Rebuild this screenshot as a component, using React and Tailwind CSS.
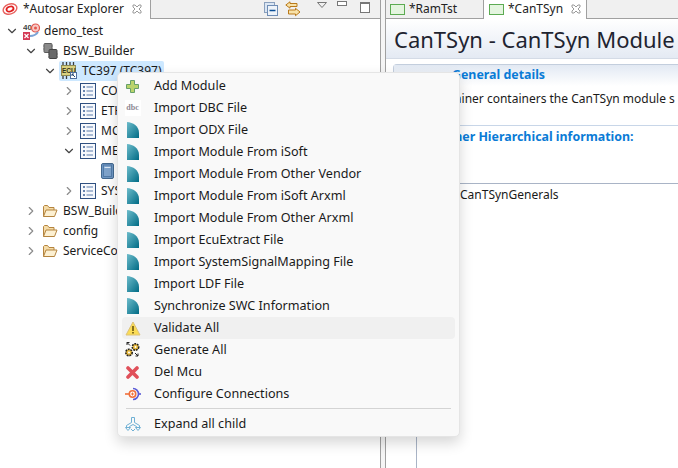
import { ChevronDown, ChevronRight } from "lucide-react";

const font = { fontFamily: '"Noto Sans", sans-serif' };

function ListIcon() {
  return (
    <svg width="16" height="16" viewBox="0 0 16 16">
      <rect x="0.5" y="0.5" width="15" height="15" fill="#f6f8fc" stroke="#2f4f80" />
      <path d="M3 4h2M3 8h2M3 12h2" stroke="#3c5f95" strokeWidth="1.4" />
      <path d="M6.5 4h6.5M6.5 8h6.5M6.5 12h6.5" stroke="#5d7cab" strokeWidth="1" />
    </svg>
  );
}

function FolderIcon() {
  return (
    <svg width="16" height="14" viewBox="0 0 16 14">
      <path d="M1.5 12.5V2.5l1-1h3l1.5 2h5v2.5" fill="#f5dca8" stroke="#b4843f" />
      <path d="M1.5 12.5l2.5-6.5h11l-2.5 6.5z" fill="#fcf0d2" stroke="#b4843f" />
    </svg>
  );
}

function ChipIcon() {
  return (
    <svg width="15" height="16" viewBox="0 0 15 16">
      <path d="M0 3h1M0 6h1M9 3h1M9 6h1M5 11h1M5 14h1M14 11h1M14 14h1" stroke="#999" />
      <rect x="1" y="0.5" width="8" height="9" rx="1" fill="#8a8a8a" stroke="#5c5c5c" />
      <rect x="6" y="6.5" width="8" height="9" rx="1" fill="#6a6a6a" stroke="#444" />
    </svg>
  );
}

function EcuIcon() {
  return (
    <svg width="16" height="18" viewBox="0 0 16 18">
      <path d="M2 0v3M5.5 0v3M9 0v3M12.5 0v3" stroke="#3c3c3c" strokeWidth="1.3" />
      <path d="M2 14v3M5.5 14v3" stroke="#3c3c3c" strokeWidth="1.3" />
      <rect x="0.5" y="3.5" width="14" height="10" fill="#d9d07e" stroke="#8d8a55" />
      <text x="1" y="11" fontSize="6.5" fontWeight="700" fill="#30301a" fontFamily="Liberation Sans, sans-serif">ECU</text>
      <rect x="9.5" y="10.5" width="6" height="6" fill="#fff" stroke="#4f6f9f" />
      <path d="M11 12l3 3M11 12h2M11 12v2" stroke="#24466f" />
    </svg>
  );
}

function ProjectIcon() {
  return (
    <svg width="17" height="17" viewBox="0 0 17 17">
      <text x="0" y="7" fontSize="8" fontWeight="700" fill="#444" fontFamily="Liberation Sans, sans-serif">40</text>
      <circle cx="12.5" cy="5" r="4" fill="#f8c9c4" stroke="#e2574f" strokeWidth="1.2" />
      <circle cx="12.5" cy="5" r="1.5" fill="#e2574f" />
      <path d="M7 13c3 0 6-1 8-4" stroke="#7ba4d6" strokeWidth="2" fill="none" />
      <rect x="0" y="9" width="7" height="8" fill="#d43a55" />
      <path d="M1.5 11l4 4M5.5 11l-4 4" stroke="#fff" strokeWidth="1.2" />
    </svg>
  );
}

function BookIcon() {
  return (
    <svg width="13" height="16" viewBox="0 0 13 16">
      <rect x="0.5" y="0.5" width="12" height="15" rx="1.5" fill="#6f97c4" stroke="#44698f" />
      <rect x="2.5" y="2" width="8" height="11.5" fill="#7fa3cb" stroke="#527ba8" />
      <path d="M3.5 4.5h6" stroke="#dce8f4" />
    </svg>
  );
}

function TealIcon() {
  return (
    <svg width="12" height="16" viewBox="0 0 12 16">
      <defs>
        <linearGradient id="teal" x1="0" y1="0" x2="1" y2="1">
          <stop offset="0" stopColor="#6dbccb" />
          <stop offset="1" stopColor="#006b85" />
        </linearGradient>
      </defs>
      <path d="M0 0C6 0.5 12 4 12 11V16H0z" fill="url(#teal)" />
    </svg>
  );
}

function CloseIcon({ className }) {
  return (
    <svg width="10" height="10" viewBox="0 0 10 10" className={className} fill="none" stroke="#9a9a9a">
      <path d="M1 1h2l2 2 2-2h2v2L7 5l2 2v2H7L5 7 3 9H1V7l2-2-2-2z" />
    </svg>
  );
}

const plusIcon = (
  <svg width="13" height="13" viewBox="0 0 13 13">
    <path d="M4.5 0.5h4v4h4v4h-4v4h-4v-4h-4v-4h4z" fill="#b9d46b" stroke="#66a06a" />
  </svg>
);

const dbcIcon = (
  <span className="flex h-4 w-4 items-center justify-center bg-white text-[8px] font-bold leading-none text-[#8d8794]" style={{ fontFamily: '"Liberation Serif", serif' }}>
    dbc
  </span>
);

const warnIcon = (
  <svg width="16" height="15" viewBox="0 0 16 15">
    <path d="M8 1l7 13H1z" fill="#fbdc55" stroke="#dcc27a" strokeLinejoin="round" />
    <path d="M8 5v5" stroke="#6a5410" strokeWidth="1.6" />
    <path d="M8 11v1.5" stroke="#6a5410" strokeWidth="1.6" />
  </svg>
);

const gearsIcon = (
  <svg width="17" height="16" viewBox="0 0 17 16">
    <circle cx="11.5" cy="5" r="3.2" fill="#e8b93c" stroke="#222" strokeWidth="1.6" strokeDasharray="1.8 0.9" />
    <circle cx="5" cy="10.5" r="3.2" fill="#e8b93c" stroke="#222" strokeWidth="1.6" strokeDasharray="1.8 0.9" />
    <circle cx="11.5" cy="5" r="1" fill="#fff" />
    <circle cx="5" cy="10.5" r="1" fill="#fff" />
    <path d="M11 11l3 3M14 11.5V14h-2.5M3 0.5L6 3.5M3 3V0.5h2.5" stroke="#222" fill="none" />
  </svg>
);

const delIcon = (
  <svg width="13" height="13" viewBox="0 0 13 13">
    <path d="M2 2l9 9M11 2l-9 9" stroke="#e0505a" strokeWidth="3.6" strokeLinecap="round" />
  </svg>
);

const connectIcon = (
  <svg width="16" height="14" viewBox="0 0 16 14">
    <path d="M8 1.5a5.5 5.5 0 0 1 0 11" fill="none" stroke="#5a5ad6" strokeWidth="1.6" />
    <path d="M13 7h3" stroke="#5a5ad6" strokeWidth="1.6" />
    <path d="M0 7h5" stroke="#f0703c" strokeWidth="1.6" />
    <circle cx="7.5" cy="7" r="3.2" fill="#fff" stroke="#f0703c" strokeWidth="1.6" />
    <path d="M6 7h3M7.5 5.5v3" stroke="#f0703c" />
  </svg>
);

const expandIcon = (
  <svg width="16" height="15" viewBox="0 0 16 15" fill="none" stroke="#6fb0d4">
    <path d="M6.5 0.5h3v5l5 3v2h-3v-1l-3.5-2-3.5 2v1h-3v-2l5-3z" />
    <path d="M0.5 10.5h5l-2.5 3zM10.5 10.5h5l-2.5 3z" />
    <path d="M6 12l2 2 2-2" />
  </svg>
);

const menuItems = [
  { label: "Add Module", icon: plusIcon },
  { label: "Import DBC File", icon: dbcIcon },
  { label: "Import ODX File" },
  { label: "Import Module From iSoft" },
  { label: "Import Module From Other Vendor" },
  { label: "Import Module From iSoft Arxml" },
  { label: "Import Module From Other Arxml" },
  { label: "Import EcuExtract File" },
  { label: "Import SystemSignalMapping File" },
  { label: "Import LDF File" },
  { label: "Synchronize SWC Information" },
  { label: "Validate All", icon: warnIcon, active: true },
  { label: "Generate All", icon: gearsIcon },
  { label: "Del Mcu", icon: delIcon },
  { label: "Configure Connections", icon: connectIcon },
];

function MenuRow({ label, icon, active }) {
  return (
    <div className={`flex h-[22px] items-center rounded-[4px] ${active ? "bg-[#f0f0f0]" : ""}`}>
      <span className="flex w-[21px] shrink-0 justify-center">{icon || <TealIcon />}</span>
      <span className="pl-[11px] text-[12.6px] text-[#1a1a1a]">{label}</span>
    </div>
  );
}

function ContextMenu() {
  return (
    <div className="absolute left-[117px] top-[72px] w-[343px] rounded-[5px] border border-[#e5e5e5] bg-[#f9f9f9] px-[4px] pt-[2px] pb-px shadow-[0_6px_14px_rgba(0,0,0,0.16)]">
      {menuItems.map((item) => (
        <MenuRow key={item.label} {...item} />
      ))}
      <div className="mx-[4px] mt-[3px] mb-[4px] h-px bg-[#d4d4d4]" />
      <MenuRow label="Expand all child" icon={expandIcon} />
    </div>
  );
}

function TreeRow({ depth, open, leaf, icon, label, selected }) {
  const Chevron = open ? ChevronDown : ChevronRight;
  return (
    <div className="flex h-5 items-center" style={{ paddingLeft: depth * 19 + 3 }}>
      <span className="flex w-[17px] justify-center">
        {!leaf && <Chevron size={14} strokeWidth={2} className={open ? "text-[#444]" : "text-[#8c8c8c]"} />}
      </span>
      <div className={`ml-px flex h-5 items-center gap-[4px] rounded-[2px] pl-px pr-[2px] ${selected ? "bg-[#cde8ff]" : ""}`}>
        <span className="flex w-[18px] justify-center">{icon}</span>
        <span className="whitespace-nowrap text-[12px] text-[#1a1a1a]">{label}</span>
      </div>
    </div>
  );
}

function ExplorerPane() {
  return (
    <aside className="flex h-full w-[380px] shrink-0 flex-col">
      <div className="flex h-[19px] items-stretch bg-[#f0f0f0]">
        <div className="flex w-[151px] items-center gap-[3px] border-r border-[#a0a0a0] bg-white pb-px pl-[2px]">
          <svg width="18" height="14" viewBox="0 0 18 14">
            <ellipse cx="8" cy="7" rx="7" ry="5" fill="none" stroke="#e8625f" strokeWidth="1.4" transform="rotate(-20 8 7)" />
            <ellipse cx="8" cy="7" rx="3.6" ry="2.4" fill="#fff" stroke="#e01f1f" strokeWidth="1.8" transform="rotate(-20 8 7)" />
          </svg>
          <span className="whitespace-nowrap text-[12px] text-[#222]">*Autosar Explorer</span>
          <CloseIcon className="ml-[5px]" />
        </div>
        <div className="flex flex-1 items-center border-b border-[#a0a0a0] pl-[113px]">
          <svg width="14" height="14" viewBox="0 0 14 14">
            <rect x="0.5" y="0.5" width="10" height="10" fill="#dbe6f3" stroke="#8aa0bd" />
            <rect x="3.5" y="3.5" width="10" height="10" fill="#eef3f9" stroke="#6f8db5" />
            <path d="M5.5 8.5h6" stroke="#0a4f96" strokeWidth="1.5" />
          </svg>
          <svg width="16" height="16" viewBox="0 0 16 16" className="ml-[7px]" stroke="#b9791a" fill="#f8e2a8">
            <path d="M12 2.5H5V0.8L0.8 4 5 7.2V5.5h7z" />
            <path d="M3.5 9h7V7.3L15 11l-4.5 3.7V13h-7z" />
          </svg>
          <svg width="10" height="6" viewBox="0 0 10 6" className="ml-[16px] mb-[8px]" fill="none" stroke="#777">
            <path d="M0.5 0.5h9L5 5.5z" />
          </svg>
          <span className="ml-[10px] mb-[12px] h-[5px] w-[10px] border border-[#777] bg-white" />
          <span className="ml-[13px] mb-[4px] h-[11px] w-[10px] border border-[#777] border-t-2 bg-white" />
        </div>
      </div>
      <div className="flex-1 bg-white pt-[2px]">
        <TreeRow depth={0} open icon={<ProjectIcon />} label="demo_test" />
        <TreeRow depth={1} open icon={<ChipIcon />} label="BSW_Builder" />
        <TreeRow depth={2} open selected icon={<EcuIcon />} label="TC397 (TC397)" />
        <TreeRow depth={3} icon={<ListIcon />} label="COM" />
        <TreeRow depth={3} icon={<ListIcon />} label="ETH" />
        <TreeRow depth={3} icon={<ListIcon />} label="MCAL" />
        <TreeRow depth={3} open icon={<ListIcon />} label="MEM" />
        <TreeRow depth={4} leaf icon={<BookIcon />} label="" />
        <TreeRow depth={3} icon={<ListIcon />} label="SYS" />
        <TreeRow depth={1} icon={<FolderIcon />} label="BSW_Builder" />
        <TreeRow depth={1} icon={<FolderIcon />} label="config" />
        <TreeRow depth={1} icon={<FolderIcon />} label="ServiceComponent" />
      </div>
    </aside>
  );
}

function EditorPane() {
  return (
    <main className="flex h-full min-w-0 flex-1 flex-col overflow-hidden">
      <div className="flex h-[19px] items-stretch bg-[#f0f0f0]">
        <div className="flex w-[98px] items-center gap-[4px] border-r border-b border-[#a0a0a0] pl-[4px]">
          <span className="h-[11px] w-[15px] border border-[#5cab52] bg-[#e4f5df]" />
          <span className="text-[12px] text-[#222]">*RamTst</span>
        </div>
        <div className="flex w-[103px] items-center gap-[4px] border-r border-[#a0a0a0] bg-white pb-px pl-[5px]">
          <span className="h-[11px] w-[15px] border border-[#5cab52] bg-[#e4f5df]" />
          <span className="text-[12px] text-[#222]">*CanTSyn</span>
          <CloseIcon className="ml-[4px]" />
        </div>
        <div className="flex-1 border-b border-[#a0a0a0]" />
      </div>
      <div className="flex h-[39px] shrink-0 items-center bg-gradient-to-b from-white to-[#e4eaf3] pl-[8px]">
        <h1 className="whitespace-nowrap text-[22px] leading-none text-[#1f2430]">CanTSyn - CanTSyn Module</h1>
      </div>
      <div className="h-px shrink-0 bg-[#d4dbe6]" />
      <div className="ml-[7px] mt-[5px] flex min-h-0 flex-1 flex-col">
        <section className="h-[61px] shrink-0 rounded-tl-[4px] border-t border-l border-[#c3cedd]">
          <div className="flex h-[21px] items-center bg-gradient-to-b from-[#e2e9f3] to-white pl-[58px]">
            <h2 className="whitespace-nowrap text-[12.4px] font-bold text-[#0a7bd6]">General details</h2>
          </div>
          <p className="mt-[3px] whitespace-nowrap pl-[10px] text-[12px] leading-[20px] text-[#1a1a1a]">This container containers the CanTSyn module s</p>
        </section>
        <section className="flex min-h-0 flex-1 flex-col border-t border-[#c8d6e8]">
          <h2 className="whitespace-nowrap pl-[46px] pt-px text-[12.4px] leading-[20px] font-bold text-[#0a7bd6]">Other Hierarchical information:</h2>
          <div className="mt-[36px] ml-[23px] flex flex-1 flex-col border-l border-[#a9b4c6]">
            <div className="border-t border-[#a9b4c6] pl-[43px] pt-px text-[12px] leading-[20px] text-[#1a1a1a]">CanTSynGenerals</div>
          </div>
        </section>
      </div>
    </main>
  );
}

export default function App() {
  return (
    <div className="relative flex h-[468px] w-[678px] overflow-hidden bg-white" style={font}>
      <ExplorerPane />
      <div className="h-full w-[6px] shrink-0 border-x border-[#a0a0a0] bg-[#f5f5f5]" />
      <EditorPane />
      <ContextMenu />
    </div>
  );
}
